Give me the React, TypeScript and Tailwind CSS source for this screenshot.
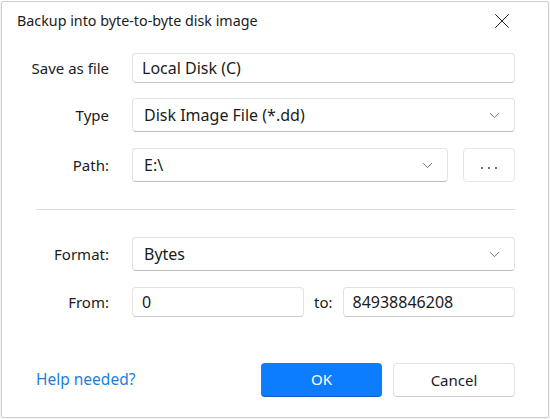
import { X, ChevronDown } from "lucide-react"

const font = { fontFamily: '"Noto Sans", "Open Sans", sans-serif' }

function Field({ value, className = "" }: { value: string; className?: string }) {
  return (
    <div
      className={`flex items-center h-[30px] px-[9px] rounded-[4px] border border-[#e3e3e3] border-b-[#c9c9c9] bg-white text-[16px] text-[#1b1b1b] ${className}`}
    >
      {value}
    </div>
  )
}

function Select({ value, className = "" }: { value: string; className?: string }) {
  return (
    <div
      className={`flex items-center justify-between h-[34px] pl-[11px] pr-[11px] rounded-[4px] border border-[#e3e3e3] border-b-[#bdbdbd] bg-white text-[16px] text-[#1b1b1b] ${className}`}
    >
      <span>{value}</span>
      <ChevronDown size={17} strokeWidth={1.2} className="text-[#5a5a5a]" />
    </div>
  )
}

function Label({ children }: { children: React.ReactNode }) {
  return <div className="w-[107px] shrink-0 text-right text-[15px] text-[#1b1b1b]">{children}</div>
}

export default function App() {
  return (
    <div className="w-[550px] h-[419px] bg-[#f3f3f3]" style={font}>
      <div className="w-[548px] h-[417px] ml-px mt-px bg-white border border-[#cfcfcf] rounded-[3px] flex flex-col">
        {/* title bar */}
        <div className="flex items-center justify-between h-[37px] pl-[15px] pr-[33px] pt-[1px]">
          <span className="text-[14.3px] text-[#1b1b1b]">Backup into byte-to-byte disk image</span>
          <X size={26} strokeWidth={0.9} className="text-[#1b1b1b]" />
        </div>

        <div className="flex flex-col pr-[33px]">
          <div className="flex items-center gap-[23px] mt-[14px]">
            <Label>Save as file</Label>
            <Field value="Local Disk (C)" className="flex-1" />
          </div>

          <div className="flex items-center gap-[23px] mt-[15px]">
            <Label>Type</Label>
            <Select value="Disk Image File (*.dd)" className="flex-1" />
          </div>

          <div className="flex items-center gap-[23px] mt-[16px]">
            <Label>Path:</Label>
            <div className="flex-1 flex items-center gap-[15px]">
              <Select value="E:\" className="flex-1" />
              <div className="w-[52px] h-[34px] rounded-[4px] border border-[#e6e6e6] bg-white flex items-center justify-center gap-[5px] pt-[5px]">
                <span className="w-[2px] h-[2px] rounded-full bg-[#444]" />
                <span className="w-[2px] h-[2px] rounded-full bg-[#444]" />
                <span className="w-[2px] h-[2px] rounded-full bg-[#444]" />
              </div>
            </div>
          </div>

          <div className="ml-[34px] mt-[27px] h-px bg-[#dcdcdc]" />

          <div className="flex items-center gap-[23px] mt-[27px]">
            <Label>Format:</Label>
            <Select value="Bytes" className="flex-1" />
          </div>

          <div className="flex items-center gap-[23px] mt-[16px]">
            <Label>From:</Label>
            <Field value="0" className="w-[172px]" />
            <span className="text-[15px] text-[#1b1b1b] -ml-[13px]">to:</span>
            <Field value="84938846208" className="flex-1 -ml-[13px]" />
          </div>

          <div className="flex items-center mt-[46px] pl-[34px]">
            <span className="text-[15.5px] text-[#1a7fdc]">Help needed?</span>
            <div className="flex-1" />
            <button className="w-[121px] h-[34px] rounded-[4px] bg-[#0b7dfe] border-b border-[#0a5fc0] text-white text-[15px]">
              OK
            </button>
            <button className="w-[122px] h-[34px] ml-[11px] rounded-[4px] border border-[#e3e3e3] border-b-[#cfcfcf] bg-white text-[15px] text-[#1b1b1b]">
              Cancel
            </button>
          </div>
        </div>
      </div>
    </div>
  )
}
